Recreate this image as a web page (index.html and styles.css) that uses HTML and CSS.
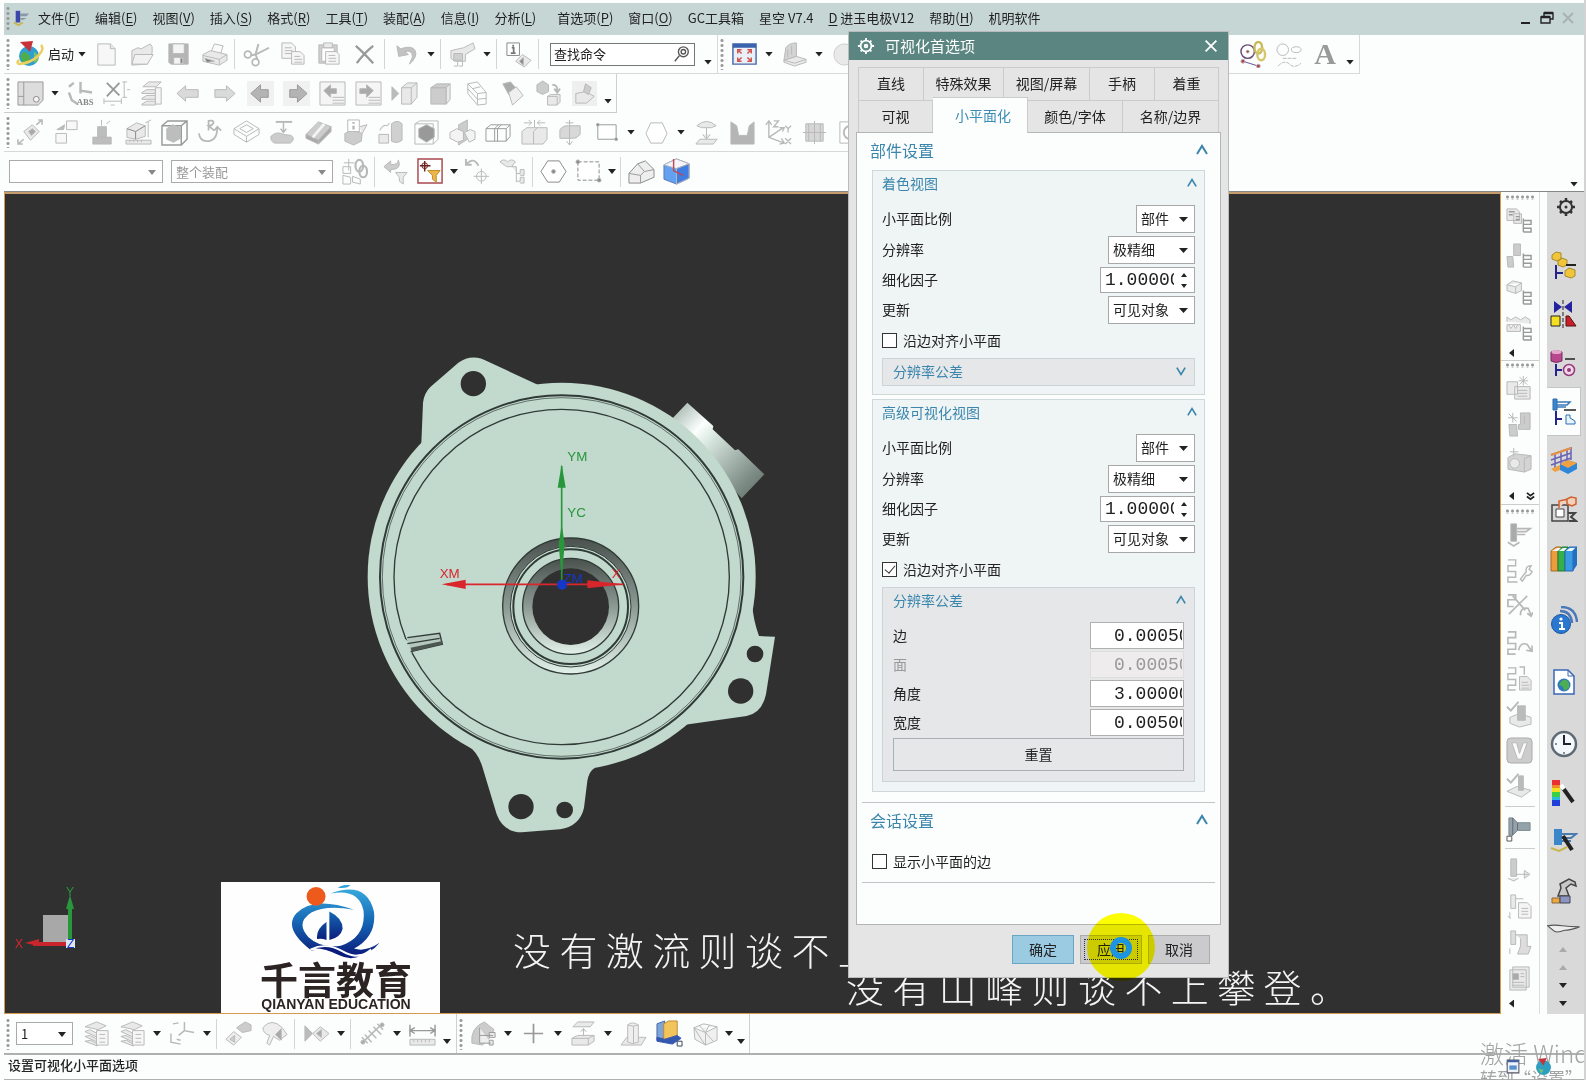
FILE: index.html
```html
<!DOCTYPE html>
<html lang="zh-CN">
<head>
<meta charset="utf-8">
<title>可视化首选项</title>
<link rel="stylesheet" href="styles.css">
</head>
<body>
<div class="app">
  <nav class="menubar">
    <span class="grip"></span>
    <svg class="applogo" viewBox="0 0 20 20"><path d="M3 2h5v13H3z" fill="#3b48a8"/><path d="M8 5h10l-3 3H8zM8 10h7l-3 2H8z" fill="#8a97a8"/><path d="M1 15l5 3 5-3" fill="none" stroke="#c9b64a" stroke-width="2"/></svg>
    <a href="#">文件(<u>F</u>)</a><a href="#">编辑(<u>E</u>)</a><a href="#">视图(<u>V</u>)</a><a href="#">插入(<u>S</u>)</a><a href="#">格式(<u>R</u>)</a><a href="#">工具(<u>T</u>)</a><a href="#">装配(<u>A</u>)</a><a href="#">信息(<u>I</u>)</a><a href="#">分析(<u>L</u>)</a><a href="#" class="apart">首选项(<u>P</u>)</a><a href="#">窗口(<u>O</u>)</a><a href="#">GC工具箱</a><a href="#">星空 V7.4</a><a href="#"><u>D</u> 进玉电极V12</a><a href="#">帮助(<u>H</u>)</a><a href="#">机明软件</a>
    <span class="winctl">
      <button aria-label="最小化"><svg viewBox="0 0 16 16"><path d="M3 13h9" stroke="#222" stroke-width="2"/></svg></button>
      <button aria-label="还原"><svg viewBox="0 0 16 16"><path d="M5 6V3h9v6h-3M2 7h9v6H2z" fill="none" stroke="#222" stroke-width="1.4"/><path d="M5 3h9M2 7h9" stroke="#222" stroke-width="2.6"/></svg></button>
      <button aria-label="关闭"><svg viewBox="0 0 16 16"><path d="M3 3l10 10M13 3L3 13" stroke="#a9b3b3" stroke-width="2"/></svg></button>
    </span>
  </nav>

  <div class="row">
    <div class="bar">
      <span class="grip"></span>
      <button class="start"><svg viewBox="0 0 28 28"><circle cx="13" cy="16" r="10" fill="#2f9fd0"/><path d="M5 14q5-4 8 1t-2 10q-7-3-6-11z" fill="#4fae4a"/><path d="M18 12q5 2 4 9l-4 2z" fill="#7cc06a"/><path d="M25 5q4 4-3 11T3 24q-3-1 0-4" fill="none" stroke="#e9d060" stroke-width="2.500"/><path d="M4 2l13-1-3 11z" fill="#c8333a"/></svg>启动<i class="tri"></i></button>
      <button class="tb" aria-label="新建"><svg viewBox="0 0 28 28"><path d="M5 3h13l5 5v17H5z" fill="#f7f7f7"/><path d="M18 3v5h5"/></svg></button>
      <button class="tb" aria-label="打开"><svg viewBox="0 0 28 28"><path d="M3 10l6-3 4 1 9-5 2 3v6l-5 12-16 1z"/><path d="M6 14h19l-6 10H3z" fill="#f2f2f2"/></svg></button>
      <button class="tb" aria-label="保存"><svg viewBox="0 0 28 28"><path d="M4 3h20v21H6l-2-2z" fill="#b4b4b4"/><path d="M8 3h12v10H8zM9 17h10v7H9z" fill="#f4f4f4"/><path d="M16 18h2v5h-2z" fill="#777"/></svg></button>
      <button class="tb" aria-label="打印"><svg viewBox="0 0 28 28"><path d="M10 12l4-9 9 2-3 9z" fill="#fafafa"/><path d="M2 14l8-4 17 4v6l-8 5-17-4z"/><path d="M2 15l17 4v6M19 19l8-5"/><path d="M4 18l10 3-8 1z" fill="#777"/></svg></button>
      <span class="sep"></span>
      <button class="tb" aria-label="剪切"><svg viewBox="0 0 28 28"><path d="M16 3l-3 11 2 5M27 7l-14 7-6 1" fill="none" stroke-width="2"/><circle cx="5" cy="14" r="3.500" fill="#fff" stroke-width="1.800"/><circle cx="13" cy="22" r="3.500" fill="#fff" stroke-width="1.800"/></svg></button>
      <button class="tb" aria-label="复制"><svg viewBox="0 0 28 28"><path d="M3 2h10l4 4v12H3z" fill="#f5f5f5"/><path d="M6 7h7M6 10h8M6 13h8"/><path d="M13 11h9l4 4v9H13z" fill="#f5f5f5"/><path d="M16 16h6M16 19h8M16 22h8"/></svg></button>
      <button class="tb" aria-label="粘贴"><svg viewBox="0 0 28 28"><path d="M4 4h19v19H4z" fill="#d0d0d0"/><path d="M7 7h13v14H7z" fill="#fff"/><path d="M9 2h9v5H9z"/><path d="M11 11h11l3 3v10H11z" fill="#f7f7f7"/><path d="M14 15h7M14 18h8M14 21h8"/></svg></button>
      <button class="tb" aria-label="删除"><svg viewBox="0 0 28 28"><path d="M5 5q8 7 18 18M23 5Q14 12 6 23" fill="none" stroke="#999" stroke-width="2.400"/></svg></button>
      <span class="sep"></span>
      <button class="tb" aria-label="撤销"><svg viewBox="0 0 28 28"><path d="M4 5l2 11 10-2-4-3q9-2 8 6l-3 7q9-8 6-14T8 8z" fill="#c2c2c2"/></svg></button><i class="tri wide"></i>
      <span class="sep"></span>
      <button class="tb" aria-label="触控"><svg viewBox="0 0 28 28"><path d="M2 10l13-3 10-5 2 6-10 6v7H6l-4-3z"/><path d="M5 13h9v7H5z" fill="#cfcfcf"/><path d="M9 21v5H5M14 21v5h-4" fill="none"/></svg></button><i class="tri wide"></i>
      <span class="sep"></span>
      <button class="tb" aria-label="信息"><svg viewBox="0 0 28 28"><path d="M2 2h13v13H2z" fill="#fff" stroke="#888"/><path d="M8.500 4v2M7 7h2v5M6 12.500h5" stroke="#777" stroke-width="1.800"/><path d="M11 21l7-7 9 6-7 7z"/><path d="M15 21l4-4v8z" fill="#888"/></svg></button>
      <span class="sep"></span>
      <label class="search"><input type="text" value="查找命令" aria-label="查找命令"><svg viewBox="0 0 20 20"><circle cx="11.500" cy="7.500" r="5.500"/><circle cx="11.500" cy="7.500" r="2.500"/><path d="M7 12l-5 6"/></svg></label>
      <i class="tri wide low"></i>
    </div>
    <div class="bar second">
      <span class="grip"></span>
      <button class="tb" aria-label="适合窗口"><svg viewBox="0 0 28 28"><path d="M2 3h24v21H2z" fill="#e9f0f8" stroke="#4a6aa5" stroke-width="1.500"/><path d="M2 3h24v4H2z" fill="#3a62ad" stroke="none"/><path d="M8 10l3 3M20 10l-3 3M8 20l3-3M20 20l-3-3M7 13V9h4M17 9h4v4M7 17v4h4M21 17v4h-4" fill="none" stroke="#d0524a" stroke-width="1.500"/></svg></button><i class="tri wide"></i>
      <button class="tb" aria-label="方位"><svg viewBox="0 0 28 28"><path d="M5 7q3-5 11-5v14L3 20z" fill="#d4d4d4"/><path d="M3 20l13-4 10 3v3l-12 4-11-4z"/><path d="M3 20l11 3 12-4M7 17V9M11 14V5"/></svg></button><i class="tri wide"></i>
      <button class="tb" aria-label="着色"><svg viewBox="0 0 28 28"><circle cx="14" cy="14" r="11" stroke="#ccc"/></svg></button>
    </div>
    <div class="bar third">
      <button class="tb" aria-label="显示曲线"><svg viewBox="0 0 28 28"><circle cx="8" cy="11" r="7" fill="none" stroke="#6b4b78" stroke-width="1.500"/><circle cx="8" cy="11" r="1.500" fill="#b03030"/><ellipse cx="19" cy="7" rx="4" ry="6" fill="none" stroke="#c9b95a" stroke-width="2.500"/><ellipse cx="22" cy="14" rx="4" ry="6" fill="none" stroke="#d6c76a" stroke-width="2.500"/><path d="M3 21l16 5" stroke="#6b4b9a"/><circle cx="3" cy="21" r="2" fill="#b04050"/><circle cx="19" cy="26" r="2" fill="#b04050"/></svg></button>
      <button class="tb" aria-label="曲线"><svg viewBox="0 0 28 28"><circle cx="7" cy="9" r="6" fill="none"/><ellipse cx="21" cy="9" rx="5" ry="3" fill="none"/><path d="M7 18h15M2 26q7-7 12-2t12-1" fill="none" stroke-dasharray="4 1"/></svg></button>
      <button class="tb letter" aria-label="文字">A</button>
      <i class="tri wide low"></i>
    </div>
  </div>

  <div class="row">
    <div class="bar box">
      <span class="grip"></span>
      <button class="tb" aria-label="布局"><svg viewBox="0 0 28 28"><path d="M1 2h26v19l-5 5H1z" fill="#ddd" stroke="#999"/><path d="M7 2v24M1 17h6" stroke="#999"/><circle cx="20" cy="20" r="3" fill="#f5f5f5" stroke="#888"/></svg></button><i class="tri wide"></i>
      <button class="tb" aria-label="绝对坐标"><svg viewBox="0 0 28 28"><path d="M14 2v12M14 11l12 2M2 13l3 8 6 4M2 7l5-4" stroke-width="2.500" fill="none"/><text x="10" y="26" class="abs">ABS</text></svg></button>
      <button class="tb" aria-label="尺寸"><svg viewBox="0 0 28 28"><path d="M4 3l13 13M17 3L4 17" stroke="#999" stroke-width="2"/><path d="M20 2h5M22 2v16M20 18h5M1 22h18M1 19v6M19 19v6M8 26h4M25 10h3"/></svg></button>
      <button class="tb" aria-label="图层"><svg viewBox="0 0 28 28"><path d="M4 7l6-5h13l-5 5zM3 13l5-3h9v4H3zM3 19l5-3h9v4H3zM3 25l5-3h9v4H3z"/><path d="M17 8h6v17h-6z" fill="#f5f5f5"/></svg></button>
      <button class="tb" aria-label="后退"><svg viewBox="0 0 28 28"><path d="M2 14l9-8v4h13v8H11v4z" fill="#dadada"/></svg></button>
      <button class="tb" aria-label="前进"><svg viewBox="0 0 28 28"><path d="M25 14l-9-8v4H4v8h12v4z" fill="#dadada"/></svg></button>
      <button class="tb" aria-label="上一个"><svg viewBox="0 0 28 28"><path d="M0 1h28v26H0z" fill="#f1f1f1" stroke="none"/><path d="M4 14l10-9v5h8v8h-8v5z" fill="#b4b4b4" stroke="#999"/></svg></button>
      <button class="tb" aria-label="下一个"><svg viewBox="0 0 28 28"><path d="M0 1h28v26H0z" fill="#f1f1f1" stroke="none"/><path d="M25 14L15 5v5H7v8h8v5z" fill="#b4b4b4" stroke="#999"/></svg></button>
      <button class="tb" aria-label="上一页"><svg viewBox="0 0 28 28"><path d="M1 2h26v24H1z" fill="#f5f5f5"/><path d="M5 11l7-6v4h6v5h-6v4z" fill="#aaa"/><path d="M14 18h12M14 21h12M14 24h12"/></svg></button>
      <button class="tb" aria-label="下一页"><svg viewBox="0 0 28 28"><path d="M1 2h26v24H1z" fill="#f5f5f5"/><path d="M19 11l-7-6v4H5v5h7v4z" fill="#aaa"/><path d="M14 18h12M14 21h12M14 24h12"/></svg></button>
      <button class="tb" aria-label="镜像"><svg viewBox="0 0 28 28"><path d="M1 7v14l7-7z" fill="#bbb"/><path d="M11 8l6-5h10v15l-6 7H11zM11 8h10v17M21 8l6-5"/></svg></button>
      <button class="tb" aria-label="实体"><svg viewBox="0 0 28 28"><path d="M4 8l6-4h14l-4 4zM4 8h16v17H4z" fill="#ccc"/><path d="M20 8l4-4v16l-4 5z"/></svg></button>
      <button class="tb" aria-label="线框"><svg viewBox="0 0 28 28"><path d="M5 4l10-2 9 11v12l-9 1L5 14zM5 4l10 10 9-1M15 14v12M10 9l8-2M5 9l10 11 9-1" fill="none"/></svg></button>
      <button class="tb" aria-label="光源"><svg viewBox="0 0 28 28"><path d="M4 4l8-2 6 7-8 6z" fill="#aaa"/><path d="M10 13l8-6 7 9-11 10z" fill="#efefef"/></svg></button>
      <button class="tb" aria-label="转换"><svg viewBox="0 0 28 28"><path d="M2 5l6-4 6 4v7l-6 3-6-3z" fill="#ccc"/><path d="M18 5q6 0 5 7M20 9l3 4 3-4" fill="none" stroke-width="2"/><path d="M13 17l3-2h10v8l-3 3H13zM13 17h10v9"/></svg></button>
      <button class="tb" aria-label="渲染"><svg viewBox="0 0 28 28"><path d="M1 1h26v26H1z" fill="#efefef" stroke="none"/><path d="M5 14l10-2 9 5-8 7H5z"/><path d="M15 4l6 4-3 7-5-3z" fill="#ccc"/></svg></button>
      <i class="tri low"></i>
    </div>
  </div>

  <div class="row">
    <div class="bar half">
      <span class="grip"></span>
      <button class="tb" aria-label="移动面"><svg viewBox="0 0 28 28"><path d="M7 13l9-7 7 7-9 9z"/><path d="M12 13l4-3 3 3-4 4z" fill="#aaa"/><path d="M20 6l6-5M22 1h4v5M7 21l-6 5M1 21v5h5" fill="none" stroke-width="1.600"/></svg></button>
      <button class="tb" aria-label="复制面"><svg viewBox="0 0 28 28"><path d="M14 2h11v9H14zM3 15h11v10H3z" fill="#f8f8f8"/><path d="M4 11l8-5-1 5z" fill="#bbb"/></svg></button>
      <button class="tb" aria-label="凸台"><svg viewBox="0 0 28 28"><path d="M9 8h9v11h5v7H4v-7h5z" fill="#bdbdbd"/><path d="M4 19h19M13 1v6M18 5l4-3"/></svg></button>
      <button class="tb" aria-label="块"><svg viewBox="0 0 28 28"><path d="M2 10l10-6 9 3v11l-10 3-9-2z"/><path d="M2 10l9 3 10-6M11 13v8" stroke="#888"/><path d="M1 22h26v4H1z"/><path d="M5 22v2M9 22v2M13 22v2M17 22v2M24 3v16M21 4l6-3"/></svg></button>
      <button class="tb" aria-label="包容体"><svg viewBox="0 0 28 28"><path d="M1 7l6-5h20v19l-6 6H1zM1 7h20v20M21 7l6-5" fill="none" stroke="#999" stroke-width="1.500"/><path d="M6 10l6-4 8 3v11l-7 4-7-3z" fill="#bdbdbd"/></svg></button>
      <button class="tb" aria-label="倒圆"><svg viewBox="0 0 28 28"><path d="M2 15q1 8 8 8 11 0 11-14M18 12l3-4 4 4M12 12V2q6-1 5 2t-5 3l6 5" fill="none" stroke-width="1.800"/></svg></button>
      <button class="tb" aria-label="片体"><svg viewBox="0 0 28 28"><path d="M1 10l13-8 13 8-13 8zM1 16l13 8 13-8M7 10l7-4 7 4-7 4zM1 10v6M27 10v6M14 18v6" fill="none"/></svg></button>
      <button class="tb" aria-label="拔模"><svg viewBox="0 0 28 28"><path d="M7 3h17" stroke-width="2"/><path d="M15 4v9M12 10l3 4 3-4" fill="none" stroke-width="1.500"/><path d="M2 18q6-6 13-2l8 1q5 4-1 8H6q-5-2-4-7z" fill="#ccc"/></svg></button>
      <button class="tb" aria-label="加厚"><svg viewBox="0 0 28 28"><path d="M1 16L14 3l13 5-13 14z" fill="#ccc"/><path d="M1 16v4l13 6v-4zM14 22v4L27 13V8z" fill="#aaa"/><path d="M8 19L20 5" stroke="#f4f4f4" stroke-width="3"/></svg></button>
      <button class="tb" aria-label="对象信息"><svg viewBox="0 0 28 28"><path d="M4 15l9-4 9 4-1 8-8 4-9-4z" fill="#ccc"/><path d="M7 1h12v12H7z" fill="#fff"/><path d="M13 3v2M13 7v4" stroke-width="2.500"/><path d="M19 8l8-2-5 9"/></svg></button>
      <button class="tb" aria-label="替换"><svg viewBox="0 0 28 28"><path d="M15 5q6-5 11 0v17q-5 4-11 1z" fill="#d0d0d0"/><path d="M2 16h10v9H2zM3 12q2-7 8-5l2-3"/></svg></button>
      <button class="tb" aria-label="阴影体"><svg viewBox="0 0 28 28"><path d="M2 5l5-3h19v19l-5 5H2zM2 5h19v21" fill="none"/><path d="M6 10l8-4 8 4v9l-8 5-8-5z" fill="#999"/></svg></button>
      <button class="tb" aria-label="分割"><svg viewBox="0 0 28 28"><path d="M10 6l9-5v20l-9 6z" fill="#ccc"/><path d="M1 14l7-4 7 3v9l-6 2-8-4zM16 14l6-3 5 2v8l-6 3z" fill="#f3f3f3"/></svg></button>
      <button class="tb" aria-label="拼接"><svg viewBox="0 0 28 28"><path d="M1 10l5-4h20v12l-4 5H1zM1 10h21v13M22 10l4-4M10 23V10l4-4M13 23V10l4-4" fill="none" stroke="#999"/></svg></button>
      <button class="tb" aria-label="拉伸"><svg viewBox="0 0 28 28"><path d="M1 13l5-4h21v12l-4 5H1zM13 26V13l4-4"/><path d="M14 1v8M3 4h8M8 1l3 3-3 3M25 4h-8M20 1l-3 3 3 3" fill="none"/></svg></button>
      <button class="tb" aria-label="偏置"><svg viewBox="0 0 28 28"><path d="M3 11q4-5 9-4h12v9q-4 5-9 4H3z" fill="#d8d8d8"/><path d="M13 1v26M9 4h8M10 23l3 4 3-4" fill="none"/></svg></button>
      <button class="tb" aria-label="矩形"><svg viewBox="0 0 28 28"><path d="M5 6h19v15H5z" fill="#fff" stroke="#999"/><circle cx="5" cy="6" r="1.500" fill="#888"/><circle cx="24" cy="21" r="1.500" fill="#888"/></svg></button><i class="tri wide"></i>
      <button class="tb" aria-label="多边形"><svg viewBox="0 0 28 28"><path d="M8 4h12l5 11-5 10H8L3 15z" fill="#fff"/></svg></button><i class="tri wide"></i>
      <button class="tb" aria-label="投影"><svg viewBox="0 0 28 28"><path d="M4 7q10-9 20 0l-5 2H9zM14 9v11M10 16l4 5 4-5M3 26l4-5h18l-4 5z"/></svg></button>
      <button class="tb" aria-label="腔"><svg viewBox="0 0 28 28"><path d="M2 3l6 4 2 10h9l2-10 5-4v23H2z" fill="#b5b5b5"/></svg></button>
      <button class="tb" aria-label="坐标系"><svg viewBox="0 0 28 28"><path d="M4 3v16l16 6M4 19L19 9M1 6l3-4 3 4M15 9h5l-2 4M17 20l3 5-5 1M9 2h5l-5 6h5M21 7l3 3 3-3M24 10v4M21 20l6 6M27 20l-6 6" fill="none" stroke-width="1.400"/></svg></button>
      <button class="tb" aria-label="中心线"><svg viewBox="0 0 28 28"><path d="M5 5h18v18H5z" fill="#d6d6d6"/><path d="M14 2v24M2 14h24M8 5v18M20 5v18" fill="none"/></svg></button>
      <button class="tb" aria-label="孔"><svg viewBox="0 0 28 28"><path d="M3 3h22v22H3z" fill="#fff"/><circle cx="14" cy="14" r="7" fill="none" stroke-width="2"/></svg></button>
    </div>
  </div>

  <div class="row last">
    <div class="combo filter"><select aria-label="类型过滤器"><option></option></select></div>
    <div class="combo scope"><select aria-label="选择范围"><option>整个装配</option></select></div>
    <button class="tb" aria-label="关联"><svg viewBox="0 0 28 28"><path d="M2 9h8v7H2zM2 18l8 2v7H2zM12 19l8 3v5l-8-2zM8 1v12M3 5h11" fill="none"/><ellipse cx="19" cy="8" rx="4" ry="6" fill="none" stroke-width="2.200"/><ellipse cx="23" cy="14" rx="4" ry="6" fill="none" stroke-width="2.200"/></svg></button>
    <span class="sep"></span>
    <button class="tb" aria-label="重置过滤器"><svg viewBox="0 0 28 28"><path d="M2 9l7-6v4q8 0 8-5 4 10-8 10v3z" fill="#ccc"/><path d="M14 15h12l-4 5v7l-4-3v-4z"/></svg></button>
    <button class="tb" aria-label="选择过滤器"><svg viewBox="0 0 28 28"><path d="M1 1h25v25H1z" fill="#fff" stroke="#a8484e" stroke-width="1.500"/><path d="M8 3v11M3 8h11" stroke="#6c2020" stroke-width="1.500"/><circle cx="8" cy="8" r="3" fill="none" stroke="#6c2020"/><path d="M11 13h13l-4 5v7l-4-3v-4z" fill="#ecb64a" stroke="#c08a28"/></svg></button><i class="tri"></i>
    <button class="tb" aria-label="捕捉"><svg viewBox="0 0 28 28"><path d="M2 7q8-9 13 1M2 1v6h6" fill="none" stroke-width="2"/><circle cx="18" cy="19" r="5" fill="none"/><path d="M18 11v16M10 19h16"/></svg></button>
    <button class="tb" aria-label="树"><svg viewBox="0 0 28 28"><path d="M1 4q4-4 8 0 4-4 8 0l-4 5H8zM13 9h5v5M18 12v13M18 16h4v-4h4v6h-4M18 24h4v-4h4v6h-4"/></svg></button>
    <span class="sep"></span>
    <button class="tb" aria-label="点"><svg viewBox="0 0 28 28"><path d="M8 3h12l7 11-7 11H8L1 14z" fill="#fff" stroke="#888"/><circle cx="14" cy="14" r="2" fill="#888"/></svg></button>
    <button class="tb" aria-label="框选"><svg viewBox="0 0 28 28"><path d="M3 4h22v19H3z" fill="#fff" stroke="#888" stroke-dasharray="4 2"/><circle cx="3" cy="4" r="2" fill="#888"/><circle cx="25" cy="23" r="2" fill="#888"/></svg></button><i class="tri"></i>
    <span class="sep"></span>
    <button class="tb" aria-label="房屋"><svg viewBox="0 0 28 28"><path d="M1 16l9-10 8-3 9 9v8l-14 6H1z" fill="#eee" stroke="#888"/><path d="M10 6l7 8-4 4v8M17 14l10-2M1 16l12 2" fill="none" stroke="#999"/></svg></button>
    <button class="tb" aria-label="着色视图"><svg viewBox="0 0 28 28"><path d="M1 7l13-6 13 5v15l-13 6L1 22z" fill="#64a0f0" stroke="#5878b8"/><path d="M1 7l13 4 13-5-13-5z" fill="#f4f4fa"/><path d="M14 11v16l13-6V6z" fill="#3f7de0"/><path d="M11 1v12l10 5" fill="none" stroke="#c04850" stroke-width="1.500"/></svg></button>
    <i class="tri far"></i>
  </div>

  <main class="work">
    <section class="canvas">
      <svg class="model" viewBox="0 0 1320 1530">
        <defs>
          <linearGradient id="cyl" x1="0" y1="0" x2="1" y2="1"><stop offset="0" stop-color="#98aaa2"/><stop offset=".28" stop-color="#fbfffd"/><stop offset=".42" stop-color="#d4e4dc"/><stop offset=".8" stop-color="#7f8f88"/><stop offset="1" stop-color="#5a6661"/></linearGradient>
          <linearGradient id="hub" x1="0" y1="0" x2="0" y2="1"><stop offset="0" stop-color="#4a514e"/><stop offset=".5" stop-color="#8b9993"/><stop offset="1" stop-color="#e2f2ea"/></linearGradient>
        </defs>
        <path d="M965 235l47-50 78 70-2 10 67 63 10-3 78 75-68 72z" fill="url(#cyl)"/>
        <g fill="#c2d9cd">
          <circle cx="635" cy="707" r="582"/>
          <path d="M213 330l6-145q3-28 22-47l84-73q42-30 90-3l145 68 60 100-300 200z"/>
          <path d="M1205 780q5 60 22 105l48 2-27 173q-12 56-58 65l-190 27-100-80z"/>
          <path d="M355 1215q28 18 42 62l43 143q20 54 75 54l115-9q60-10 72-65l10-80q5-30 23-40l-50-80z"/>
        </g>
        <g fill="#303030"><circle cx="370" cy="128" r="38"/><circle cx="1215" cy="939" r="25"/><circle cx="1172" cy="1050" r="38"/><circle cx="513" cy="1397" r="38"/><circle cx="644" cy="1407" r="25"/></g>
        <g fill="none" stroke="#303a36" stroke-width="4"><circle cx="635" cy="708" r="545" stroke-width="6"/><circle cx="635" cy="708" r="538" stroke-width="2"/><circle cx="635" cy="708" r="503"/></g>
        <path d="M160 890l22 45 25-10z" fill="#c2d9cd"/>
        <path d="M172 890l97-13 8 33-95 22M172 908l97-16" fill="#b4c8be" stroke="#303a36" stroke-width="4"/><path d="M182 920l95-20v10l-92 22z" fill="#4c5752"/>
        <circle cx="662" cy="795" r="204" fill="url(#hub)" stroke="#303a36" stroke-width="4"/>
        <circle cx="662" cy="797" r="181" fill="#c2d9cd" stroke="#303a36" stroke-width="3"/><circle cx="662" cy="797" r="172" fill="none" stroke="#303a36" stroke-width="6"/>
        <circle cx="662" cy="796" r="144" fill="url(#hub)" stroke="#303a36" stroke-width="4"/>
        <circle cx="662" cy="797" r="115" fill="#303030"/>
        <g stroke="#28963a" stroke-width="5" fill="#28963a"><path d="M635 375v350"/><path d="M635 370l12 70h-24zM635 550l9 60-9 100-9-100z" stroke="none"/></g>
        <g stroke="#d8262c" stroke-width="5" fill="#d8262c"><path d="M290 730h530"/><path d="M275 730l72-14v28zM822 730l-110-12v24z" stroke="none"/></g>
        <circle cx="636" cy="731" r="15" fill="#1638c8"/>
        <g class="axes"><text x="652" y="360" fill="#28963a">YM</text><text x="652" y="528" fill="#28963a">YC</text><text x="269" y="712" fill="#d8262c">XM</text><text x="785" y="712" fill="#d8262c">X</text><text x="640" y="726" fill="#1638c8">ZM</text></g>
      </svg>
      <svg class="triad" viewBox="0 0 70 70"><path d="M30 30h27v27H30z" fill="#a8a8a8"/><path d="M57 57V18" stroke="#28963a" stroke-width="4"/><path d="M57 10l4 14h-8z" fill="#28963a"/><path d="M57 59H20" stroke="#c8262c" stroke-width="4"/><path d="M12 58l14-4v7z" fill="#c8262c"/><path d="M53 54h9v9h-9z" fill="#dde6f5"/><g class="axes-s"><text x="2" y="63" fill="#d8262c">X</text><text x="53" y="11" fill="#28963a">Y</text><text x="54" y="63" fill="#1638c8">Z</text></g></svg>
      <div class="brand">
        <svg viewBox="0 0 100 78"><defs><linearGradient id="q" x1="0" y1="0" x2="0" y2="1"><stop offset="0" stop-color="#35a8dc"/><stop offset=".5" stop-color="#1565b4"/><stop offset="1" stop-color="#0b1d7c"/></linearGradient></defs><g fill="url(#q)"><path d="M44 9q38-14 46 19 3 26-21 39 12 4 27-6-15 19-41 10-14-5-31-2Q-6 46 8 30q18-19 61-4-30-5-45 3-17 11-3 26 13 12 34 9 27-9 24-37Q74 3 44 9z"/><path d="M52 3q5-4 13-3-2 4-13 3zM43 28q14 7 14 18-2 9-14 12zM40 39v19q-5-2-10-1-1-11 10-18z"/></g><path d="M23 68q17-8 34 2t30-2q-16 16-34 7T23 68z" fill="#0b1d7c" stroke="#fff" stroke-width="2"/><circle cx="29" cy="12" r="10" fill="#ee5a1c"/></svg>
        <strong>千言教育</strong><span>QIANYAN EDUCATION</span>
      </div>
      <p class="caption one">没 有 激 流 则 谈 不 上</p>
      <p class="caption two">没 有 山 峰 则 谈 不 上 攀 登 。</p>
    </section>

    <aside class="tools">
      <span class="hgrip"></span>
      <button class="tb" aria-label="程序树"><svg viewBox="0 0 28 28"><path d="M1 2h10l3 3v9H1zM8 7h8v10H8z"/><path d="M3 5h6M3 8h4M10 10h4M10 13h4M18 12v14M18 14h8v4h-8M18 22h8v4h-8" fill="none" stroke="#999" stroke-width="1.500"/></svg></button>
      <button class="tb" aria-label="刀具树"><svg viewBox="0 0 28 28"><path d="M8 1h7v12H8zM1 14h6l1 11H2z" fill="#ccc"/><path d="M18 11v14M18 13h8v4h-8M18 21h8v4h-8" fill="none" stroke="#999" stroke-width="1.500"/></svg></button>
      <button class="tb" aria-label="几何树"><svg viewBox="0 0 28 28"><path d="M1 6l6-4 9 2v8l-6 3-9-3zM1 6l9 2 6-4M10 8v7"/><path d="M18 12v14M18 14h8v4h-8M18 22h8v4h-8" fill="none" stroke="#999" stroke-width="1.500"/></svg></button>
      <button class="tb" aria-label="方法树"><svg viewBox="0 0 28 28"><path d="M1 7V2l4 3 5-3 5 3 5-3 5 3v4M1 10h14v7H1zM3 10l2 4 3-4 2 4 2-4"/><path d="M18 12v14M18 14h8v4h-8M18 22h8v4h-8" fill="none" stroke="#999" stroke-width="1.500"/></svg></button>
      <span class="more"><i class="left"></i></span>
      <span class="hgrip"></span>
      <button class="tb" aria-label="创建程序"><svg viewBox="0 0 28 28"><path d="M1 7h11v13H1zM9 12h16v13H9z"/><path d="M12 16h10M12 19h10M12 22h10M18 1v10M13 6h10M14 2l8 8M22 2l-8 8"/></svg></button>
      <button class="tb" aria-label="创建刀具"><svg viewBox="0 0 28 28"><path d="M3 14h8l1 12H4zM15 2h10v17H13v-5h2z" fill="#ccc"/><path d="M19 5v8M7 2v10M2 7h10M3 3l8 8"/></svg></button>
      <button class="tb" aria-label="创建几何体"><svg viewBox="0 0 28 28"><path d="M2 11l7-4 17 2v14l-7 3-17-3z" fill="#d4d4d4"/><circle cx="9" cy="17" r="5"/><path d="M8 1v9M4 5h9M19 12v14M19 12l7-3"/></svg></button>
      <span class="more tall"><i class="left"></i><svg viewBox="0 0 10 10"><path d="M1 1l4 3 4-3M1 5l4 3 4-3" fill="none" stroke="#222" stroke-width="2"/></svg></span>
      <span class="hgrip"></span>
      <button class="tb" aria-label="创建工序"><svg viewBox="0 0 28 28"><path d="M5 3h6v18H5z" fill="#aaa"/><path d="M11 8h14l-4 3H11M11 14h9M2 22l6 4 6-4" fill="none" stroke-width="1.800"/></svg></button>
      <button class="tb" aria-label="编辑参数"><svg viewBox="0 0 28 28"><path d="M2 3h8v6H2v6h8v6H2v5h10M15 23l6-8q-1-6 5-6l-2 4 3 2q-2 5-6 4l-4 6z" fill="none" stroke-width="1.500"/></svg></button>
      <button class="tb" aria-label="剪除"><svg viewBox="0 0 28 28"><path d="M2 2h8v5H2v7h6M7 3l13 15M22 3L3 22M15 23q0-9 8-7l3 7M22 21l4 3 2-4" fill="none" stroke-width="1.800"/></svg></button>
      <button class="tb" aria-label="重播"><svg viewBox="0 0 28 28"><path d="M2 3h8v6H2v6h8v6H2v5h8M13 22q2-9 9-6l4 6M21 22l6 1v-6" fill="none" stroke-width="1.700"/></svg></button>
      <button class="tb" aria-label="列表"><svg viewBox="0 0 28 28"><path d="M2 3h8v6H2v6h8v6H2v5h8M14 2h5v8" fill="none" stroke-width="1.500"/><path d="M14 12h8l4 4v10H14z"/><path d="M16 18h7M16 21h8M16 24h8"/></svg></button>
      <button class="tb" aria-label="校验"><svg viewBox="0 0 28 28"><path d="M1 6l4 4 8-9" fill="none" stroke-width="2"/><path d="M4 17l10-4 12 4v7l-12 3-10-4z"/><path d="M12 5h8v15h-8z" fill="#bbb"/></svg></button>
      <button class="tb" aria-label="验证"><svg viewBox="0 0 28 28"><rect x="1" y="1" width="26" height="26" rx="4" fill="#ccc" stroke="#aaa"/><path d="M6 6h5l3 11 4-11h4l-6 17h-4z" fill="#fafafa"/></svg></button>
      <button class="tb" aria-label="过切检查"><svg viewBox="0 0 28 28"><path d="M1 6l4 4 8-9" fill="none" stroke-width="2"/><path d="M1 19l10-5 15 4-10 7z"/><path d="M13 3h5v15h-5z" fill="#bbb"/></svg></button>
      <span class="hsep"></span>
      <button class="tb" aria-label="刀柄"><svg viewBox="0 0 28 28"><path d="M3 3h4l5 5h13v8H12l-5 5H3z" fill="#94a3a9" stroke="#7d8a90"/><path d="M7 3v18M12 8v8" stroke="#667"/><path d="M1 22h5v5H1z" fill="#fff" stroke="#555"/></svg></button>
      <span class="hsep"></span>
      <button class="tb" aria-label="进给"><svg viewBox="0 0 28 28"><path d="M5 2h6v18H5z" fill="#ccc"/><path d="M11 18h12M19 14l6 4-6 4zM2 22l6 3 5-3"/></svg></button>
      <button class="tb" aria-label="后处理"><svg viewBox="0 0 28 28"><path d="M5 2h5v14H5zM10 6h8M4 20v6M2 24l3 3"/><path d="M13 10h9l4 4v12H13z" fill="#f4f4f4"/><path d="M16 16h7M16 19h7M16 22h7"/></svg></button>
      <button class="tb" aria-label="机床"><svg viewBox="0 0 28 28"><path d="M5 2h5v14H5zM10 6h12v12h4l-3 8H12l3-8V10M4 20v6" fill="#ddd"/></svg></button>
      <button class="tb" aria-label="车间文档"><svg viewBox="0 0 28 28"><path d="M7 2h17v21H7zM4 5h17v21H4z"/><path d="M7 9h6v6H7z" fill="#aaa"/><path d="M15 9h4M15 12h4M7 18h12M7 21h12"/></svg></button>
      <span class="more"><i class="left"></i></span>
    </aside>

    <aside class="resource">
      <button class="gear" aria-label="设置"><svg viewBox="0 0 28 28"><circle cx="14" cy="14" r="6" fill="none" stroke="#333" stroke-width="2"/><circle cx="14" cy="14" r="1.500" fill="#333"/><path d="M14 5v3M14 20v3M5 14h3M20 14h3M8 8l2 2M18 18l2 2M20 8l-2 2M10 18l-2 2" stroke="#333" stroke-width="2.500"/></svg></button>
      <button class="first" aria-label="装配导航器"><svg viewBox="0 0 28 28"><path d="M2 4l4-3 5 1v6l-4 2-5-2zM8 10l4-3 5 2v5l-4 2-5-2zM15 20l4-3 6 2v6l-4 2-6-2z" fill="#f0c53a" stroke="#a8892a"/><path d="M6 14v14M6 22h7" stroke="#23238c" stroke-width="2"/><path d="M16 14h10" stroke="#222" stroke-width="2"/></svg></button>
      <button aria-label="约束导航器"><svg viewBox="0 0 28 28"><path d="M4 1l8 6-8 6zM22 1l-8 6 8 6z" fill="#2424a0"/><path d="M13 0v28" stroke="#222" stroke-dasharray="4 2"/><path d="M1 16h9v10H1z" fill="#f4e020" stroke="#222"/><path d="M16 16h3l7 10H16z" fill="#c8202a" stroke="#511"/></svg></button>
      <button aria-label="部件导航器"><svg viewBox="0 0 28 28"><path d="M1 3v9q5 3 11 0V3q-5-3-11 0z" fill="#b8478c" stroke="#7c2c68"/><ellipse cx="6.500" cy="3" rx="5" ry="2" fill="#e4a8cc"/><path d="M6 15v12M6 21h6" stroke="#23238c" stroke-width="2"/><path d="M15 10h10" stroke="#222" stroke-width="1.500"/><circle cx="19" cy="21" r="5.500" fill="#f0d8e8" stroke="#96387c" stroke-width="1.500"/><circle cx="19" cy="21" r="2" fill="#96387c"/></svg></button>
      <button class="on" aria-label="工序导航器"><svg viewBox="0 0 28 28"><path d="M3 1h4v11H3z" fill="#3a86d0" stroke="#2d6aa8"/><path d="M7 4h13l-3 3H7M7 9h9" fill="none" stroke="#3a78b8" stroke-width="1.500"/><path d="M6 13v14M6 21h6" stroke="#23238c" stroke-width="2"/><path d="M14 12h12" stroke="#222" stroke-width="1.500"/><path d="M16 17h4v3l5 3v3h-9z" fill="#e8f4fc" stroke="#2a70b0"/></svg></button>
      <button aria-label="加工特征"><svg viewBox="0 0 28 28"><path d="M1 8l20-7v12M1 13l20-7M1 18l20-7M5 6v15M11 4v14M17 2v12" fill="none" stroke="#6a62b4" stroke-width="1.500"/><path d="M1 8l20-7" stroke="#e89040" stroke-width="2"/><path d="M10 17l8-4 9 3v6l-9 5-8-4z" fill="#2f86d8"/><path d="M10 17l8-4 9 3-9 5zM1 22l9-4v5l-5 2z" fill="#f0a040"/></svg></button>
      <button aria-label="机床导航器"><svg viewBox="0 0 28 28"><path d="M2 9h16v16H2z" fill="#d8d8d8" stroke="#444" stroke-width="1.500"/><path d="M6 13h8v8H6z" fill="#fff" stroke="#444"/><path d="M9 12V5l9-2M17 3l4-2 5 1v6l-4 2-5-2z" fill="#f3d0b8" stroke="#d06030" stroke-width="1.500"/><path d="M18 17h7l-4 4 5 4h-7" fill="none" stroke="#444" stroke-width="2"/></svg></button>
      <button aria-label="重用库"><svg viewBox="0 0 28 28"><path d="M1 6l5-4h5L8 6v20H1z" fill="#ec9c3c" stroke="#a86a20"/><path d="M8 6l4-4h6l-3 4v20H8z" fill="#34b04a" stroke="#207a30"/><path d="M15 6l4-4h8l-4 4v20h-8z" fill="#3a9ae4" stroke="#2868b0"/><path d="M23 6l4-4v18l-4 6z" fill="#2470c0"/><path d="M2 6l5-3h4L8 6zM9 6l4-3h4l-3 3zM16 6l4-3h5l-3 3z" fill="#f2f6f8"/></svg></button>
      <button class="tall push" aria-label="信息"><svg viewBox="0 0 28 28"><circle cx="11" cy="18" r="9.500" fill="#2b78d0" stroke="#1c56a0"/><circle cx="11" cy="13" r="1.600" fill="#fff"/><path d="M9 17h3v6M9 23h6" stroke="#fff" stroke-width="2" fill="none"/><path d="M10 5q11 0 12 12M11 1q15 0 16 15" fill="none" stroke="#4a78b8" stroke-width="2.500"/></svg></button>
      <button class="tall" aria-label="浏览器"><svg viewBox="0 0 28 28"><path d="M4 2h14l6 6v18H4z" fill="#fff" stroke="#3a68b8" stroke-width="1.500"/><path d="M18 2v6h6" fill="none" stroke="#3a68b8"/><circle cx="14" cy="17" r="6.500" fill="#3078c0"/><path d="M9 17q3-6 7-5t3 8l-5 3q0-5-5-6z" fill="#4cae50"/></svg></button>
      <button class="clock" aria-label="历史记录"><svg viewBox="0 0 28 28"><circle cx="14" cy="14" r="12" fill="#f2f8fc" stroke="#606a74" stroke-width="2.500"/><path d="M14 5v9h7" fill="none" stroke="#223" stroke-width="2"/><path d="M14 22v2M5 14h2" stroke="#223"/></svg></button>
      <button aria-label="系统材料"><svg viewBox="0 0 28 28"><path d="M2 1h8v5H2z" fill="#e83030"/><path d="M2 6h8v3H2z" fill="#f08a28"/><path d="M2 9h8v4H2z" fill="#f0e020"/><path d="M2 13h8v5H2z" fill="#38d048"/><path d="M2 18h8v3H2z" fill="#28b8e0"/><path d="M2 21h8v6H2z" fill="#2040d8"/><path d="M13 9l10 14" stroke="#222" stroke-width="4"/><path d="M11 6l3 4" stroke="#fff" stroke-width="4"/></svg></button>
      <button aria-label="加工向导"><svg viewBox="0 0 28 28"><path d="M4 1h8v16H4z" fill="#3a86c8"/><path d="M12 6h14l-5 4h-9M12 13h9" fill="none" stroke="#4a7cb0" stroke-width="2"/><path d="M1 20l8 3 8-4" fill="none" stroke="#c9b64a" stroke-width="2"/><path d="M13 8l9 14" stroke="#222" stroke-width="4"/></svg></button>
      <button aria-label="机器人"><svg viewBox="0 0 28 28"><path d="M8 19l3-8-1-4 9-5 6 3 1 4-5-2-5 4 3 8z" fill="#c8c8c8" stroke="#444" stroke-width="1.500"/><path d="M2 21h8v5H2z" fill="#f0a838" stroke="#864"/><path d="M10 19h10v7H10z" fill="#8c94c0" stroke="#445"/></svg></button>
      <button class="sw" aria-label="曲面"><svg viewBox="0 0 28 14"><path d="M0 5q6-1 13 0t15 1q-8 3-13 3-8 3-10 0z" fill="#eee" stroke="#555"/></svg></button>
      <i class="nav up dim"></i><i class="nav up dim"></i><i class="nav down"></i><i class="nav down"></i>
    </aside>
  </main>

  <div class="row bottom">
    <div class="bar box">
      <span class="grip"></span>
      <div class="combo num"><select aria-label="工作图层"><option>1</option></select></div>
      <button class="tb" aria-label="图层设置"><svg viewBox="0 0 28 28"><path d="M2 7l12-5 10 4-8 4zM2 12l5-2 8 4v4zM2 17l5-1 8 4v3zM2 22l6-1 7 4v2z"/><path d="M14 11h12v15H14z" fill="#f6f6f6"/><path d="M17 15h6M17 19h6M17 23h6"/></svg></button>
      <button class="tb" aria-label="图层视图"><svg viewBox="0 0 28 28"><path d="M2 7l12-5 10 4-8 4zM2 12l5-2 8 4v4zM2 17l5-1 8 4v3zM2 22l6-1 7 4v2z"/><path d="M14 11h12v15H14z" fill="#f6f6f6"/><path d="M17 15h6M17 19h6M17 23h6"/></svg></button><i class="tri wide"></i>
      <button class="tb" aria-label="工作坐标系"><svg viewBox="0 0 28 28"><path d="M16 2v9l10 2M16 11l-6 5M2 14v9l10 2M4 4l6-1M8 20l4 1" fill="none" stroke-width="1.500"/></svg></button><i class="tri wide"></i>
      <span class="sep"></span>
      <button class="tb" aria-label="对象显示"><svg viewBox="0 0 28 28"><path d="M1 20l8-8 8 6-8 8z" fill="#eee"/><path d="M5 20l5-4v7zM12 8l9-6 6 3v6l-9 2z" fill="#ccc"/></svg></button>
      <button class="tb" aria-label="隐藏"><svg viewBox="0 0 28 28"><path d="M2 8q9-11 20 0l5 7-8 6-6-4-4 9-3-2 3-8q-7-2-7-8z" fill="#eee"/><path d="M15 15l6-6v12z" fill="#aaa"/></svg></button>
      <span class="sep"></span>
      <button class="tb" aria-label="显示"><svg viewBox="0 0 28 28"><path d="M2 6l8 8-8 8z" fill="#bbb"/><path d="M10 14l8-7 9 7-9 8z"/><path d="M14 14l5-4v8z" fill="#aaa"/></svg></button><i class="tri wide"></i>
      <span class="sep"></span>
      <button class="tb" aria-label="移动对象"><svg viewBox="0 0 28 28"><path d="M3 24L24 4M6 15l7 8M10 11l8 8M15 7l8 8M19 4l6 6M3 18l6 6" fill="none" stroke-width="1.500"/><circle cx="4" cy="23" r="2" fill="#aaa"/><circle cx="24" cy="5" r="2" fill="#aaa"/></svg></button><i class="tri wide"></i>
      <button class="tb" aria-label="测量"><svg viewBox="0 0 28 28"><path d="M1 5v12M27 5v12M1 11h26M6 8l-5 3 5 3M22 8l5 3-5 3" fill="none" stroke="#999" stroke-width="1.500"/><path d="M1 20h26v6H1z"/><path d="M5 20v3M9 20v3M13 20v3M17 20v3M21 20v3"/></svg></button>
      <i class="tri wide low"></i>
    </div>
    <div class="bar box">
      <span class="grip"></span>
      <button class="tb" aria-label="构造"><svg viewBox="0 0 28 28"><path d="M2 24Q0 8 15 2l10 8-4 8-8 8z" fill="#ccc"/><path d="M10 8v16h12M10 16h14M20 13h6v5h-6zM20 21h4v5h-4z" fill="#eee" stroke="#999"/></svg></button><i class="tri wide"></i>
      <button class="tb" aria-label="点"><svg viewBox="0 0 28 28"><path d="M14 4v20M4 14h20" stroke="#999" stroke-width="1.800"/></svg></button><i class="tri wide"></i>
      <button class="tb" aria-label="拉伸"><svg viewBox="0 0 28 28"><path d="M3 7l5-5h17l-4 5zM14 9v7M11 12l3-3 3 3M2 19l6-3h17v6l-6 4H2zM2 19h17v7M19 19l6-3"/></svg></button><i class="tri wide"></i>
      <button class="tb" aria-label="圆柱"><svg viewBox="0 0 28 28"><path d="M1 26l6-8h20l-5 8z"/><path d="M8 5q5-4 11 0v18q-6 3-11 0z" fill="#eee"/><path d="M8 5q5 3 11 0M14 7v17"/></svg></button>
      <button class="tb" aria-label="装夹"><svg viewBox="0 0 28 28"><path d="M1 4l8-3v17l-8 3z" fill="#7ea4dc" stroke="#4868a0"/><path d="M8 4l5-3h9v16l-5 3H8z" fill="#f3c45c" stroke="#b88a30"/><path d="M1 18l8 2 13-4 4 3-9 6L1 22z" fill="#3458b0" stroke="#3458b0"/><path d="M22 22h5v5h-5z" fill="#fff" stroke="#345"/></svg></button>
      <button class="tb" aria-label="网格"><svg viewBox="0 0 28 28"><path d="M2 8l10-4 14 3v14l-12 5-11-6zM2 8l12 5 12-6M14 13v13M2 8l11 17M14 13l8 9M8 6l6 7 4-8" fill="#f0f0f0"/></svg></button><i class="tri"></i><i class="tri low"></i>
    </div>
  </div>
  <footer class="status">设置可视化小平面选项
    <span class="tray"><svg viewBox="0 0 16 16"><path d="M3 2h11v12H3z" fill="#eef4fa" stroke="#556"/><path d="M3 2h11v2H3z" fill="#4060a0"/><path d="M5 7h7v4H5z" fill="#5a90d0"/></svg><svg viewBox="0 0 16 16"><circle cx="8" cy="9" r="7" fill="#2f9fc0"/><path d="M3 1l8-1-3 7z" fill="#c8333a"/><path d="M3 10l5 1-2 4z" fill="#6fc07a"/></svg></span>
  </footer>
  <div class="watermark"><b>激活 Windows</b><span>转到“设置”以激活</span></div>

  <form class="dialog" role="dialog" aria-label="可视化首选项">
    <header><svg viewBox="0 0 20 20"><circle cx="10" cy="10" r="6"/><circle cx="10" cy="10" r="1.500"/><path d="M10 1v3M10 16v3M1 10h3M16 10h3M4 4l2 2M14 14l2 2M16 4l-2 2M6 14l-2 2"/></svg><h1>可视化首选项</h1><button type="button" aria-label="关闭"><svg viewBox="0 0 20 20"><path d="M4 4l12 12M16 4L4 16"/></svg></button></header>
    <div class="tabs t1"><button type="button">直线</button><button type="button">特殊效果</button><button type="button">视图/屏幕</button><button type="button">手柄</button><button type="button">着重</button></div>
    <div class="tabs t2"><button type="button">可视</button><button type="button" class="active">小平面化</button><button type="button">颜色/字体</button><button type="button">名称/边界</button></div>
    <div class="panel">
      <section>
        <h2>部件设置<svg class="chev" viewBox="0 0 12 12"><path d="M1 10l5-8 5 8"/></svg></h2>
        <div class="group">
          <h3>着色视图<svg class="chev" viewBox="0 0 12 12"><path d="M1 10l5-8 5 8"/></svg></h3>
          <div class="fields">
            <div class="field"><label for="r1">小平面比例</label><span class="dd s"><select id="r1"><option>部件</option></select></span></div>
            <div class="field"><label for="r2">分辨率</label><span class="dd"><select id="r2"><option>极精细</option></select></span></div>
            <div class="field"><label for="r3">细化因子</label><span class="spin"><input id="r3" type="text" value="1.00000"><i></i></span></div>
            <div class="field"><label for="r4">更新</label><span class="dd"><select id="r4"><option>可见对象</option></select></span></div>
          </div>
          <label class="check"><input type="checkbox">沿边对齐小平面</label>
          <div class="sub closed"><h3>分辨率公差<svg class="chev" viewBox="0 0 12 12"><path d="M1 2l5 8 5-8"/></svg></h3></div>
        </div>
        <div class="group">
          <h3>高级可视化视图<svg class="chev" viewBox="0 0 12 12"><path d="M1 10l5-8 5 8"/></svg></h3>
          <div class="fields">
            <div class="field"><label for="v1">小平面比例</label><span class="dd s"><select id="v1"><option>部件</option></select></span></div>
            <div class="field"><label for="v2">分辨率</label><span class="dd"><select id="v2"><option>极精细</option></select></span></div>
            <div class="field"><label for="v3">细化因子</label><span class="spin"><input id="v3" type="text" value="1.00000"><i></i></span></div>
            <div class="field"><label for="v4">更新</label><span class="dd"><select id="v4"><option>可见对象</option></select></span></div>
          </div>
          <label class="check"><input type="checkbox" checked>沿边对齐小平面</label>
          <div class="sub"><h3>分辨率公差<svg class="chev" viewBox="0 0 12 12"><path d="M1 10l5-8 5 8"/></svg></h3>
            <div class="tols">
              <div class="tol"><label for="t1">边</label><input id="t1" type="text" value="0.00050"></div>
              <div class="tol off"><label for="t2">面</label><input id="t2" type="text" value="0.00050" disabled></div>
              <div class="tol"><label for="t3">角度</label><input id="t3" type="text" value="3.00000"></div>
              <div class="tol"><label for="t4">宽度</label><input id="t4" type="text" value="0.00500"></div>
              <button type="button" class="reset">重置</button>
            </div>
          </div>
        </div>
      </section>
      <section class="session">
        <h2>会话设置<svg class="chev" viewBox="0 0 12 12"><path d="M1 10l5-8 5 8"/></svg></h2>
        <label class="check"><input type="checkbox">显示小平面的边</label>
      </section>
    </div>
    <div class="actions"><button type="button" class="ok">确定</button><button type="button" class="apply">应用<span class="halo"></span><span class="ring"></span></button><button type="button">取消</button></div>
  </form>
</div>
</body>
</html>
```

FILE: styles.css
```css
* { box-sizing: border-box; }
body { margin: 0; font: 13px/20px "Noto Sans CJK SC", sans-serif; color: #222; background: #fcfdfd; }
button, select, input { font: inherit; color: inherit; margin: 0; padding: 0; border: 0; background: none; border-radius: 0; }
h1, h2, h3, p { margin: 0; font-weight: 400; }
.app { position: relative; display: flex; flex-direction: column; min-height: 100vh; padding: 3px 0 0 4px; border-right: 2px solid #d4d4d4; overflow: hidden; }

.menubar { display: flex; align-items: center; gap: 15px; height: 32px; padding-bottom: 3px; background: #c5d6d4; }
.menubar a { color: #222; text-decoration: none; white-space: nowrap; }
.menubar u { text-underline-offset: 2px; }
.menubar .grip { height: 24px; }
.menubar .applogo { width: 18px; height: 18px; margin: 0 -8px 0 -14px; }
.menubar .apart { margin-left: 6px; }
.winctl { display: flex; gap: 5px; margin-left: auto; padding-right: 8px; }
.winctl svg { display: block; width: 16px; height: 16px; }
.grip { flex: none; width: 4px; height: 32px; margin: 0 2px; background: radial-gradient(circle, #999 1px, transparent 2px) 0 0 / 4px 5px; }

.row { display: flex; height: 39px; }
.bar { display: flex; align-items: center; border-bottom: 1px solid #d8d8d8; }
.bar.second { flex: 1; border-left: 1px solid #d8d8d8; }
.bar.third { flex: none; border-right: 1px solid #d8d8d8; margin-right: 224px; padding-right: 2px; }
.bar.box { border-right: 1px solid #d0d0d0; padding-right: 2px; border-bottom: 1px solid #ccc; }
.bar.half { flex: none; width: 846px; overflow: hidden; }
.tb { flex: none; width: 36px; height: 36px; display: flex; align-items: center; justify-content: center; }
.tb svg { width: 27px; height: 27px; fill: #e9e9e9; stroke: #b8b8b8; stroke-width: 1; }
.tb.letter { font: bold 30px/36px "Liberation Serif", serif; color: #999; }
.abs { font: bold 9px "Liberation Serif", serif; fill: #888; stroke: none; }
.sep { flex: none; width: 1px; height: 30px; margin: 0 3px 0 2px; background: #d4d4d4; }
.tri { flex: none; width: 8px; height: 5px; margin: 0 2px; background: #222; clip-path: polygon(0 0, 100% 0, 50% 100%); }
.tri.wide { margin: 0 3px; }
.tri.low { margin-top: 16px; }
.tri.far { margin: 25px 6px 0 auto; }
.start { display: flex; align-items: center; width: 76px; white-space: nowrap; }
.start svg { flex: none; width: 28px; height: 28px; margin: 0 4px; }
.start .tri { margin: 0 0 0 4px; }
.search { display: flex; align-items: center; width: 145px; height: 23px; margin-left: 8px; padding: 0 3px; border: 1px solid #777; background: #fff; }
.search input { flex: 1; min-width: 0; }
.search svg { width: 18px; height: 18px; fill: none; stroke: #555; stroke-width: 1.5; }
.search + .tri { margin-left: 9px; margin-right: 5px; }

.row.last { align-items: center; }
.last .tb { width: 35px; }
.combo { position: relative; flex: none; height: 23px; border: 1px solid #aaa; background: #fff; }
.combo select { display: block; width: 100%; height: 100%; padding: 0 4px; appearance: none; opacity: 1; }
.combo::after { content: ""; position: absolute; right: 6px; top: 9px; width: 8px; height: 5px; background: #888; clip-path: polygon(0 0, 100% 0, 50% 100%); pointer-events: none; }
.filter { width: 154px; margin: 0 8px 0 5px; }
.scope { width: 162px; margin-right: 4px; color: #999; }
.num { width: 57px; margin: 0 5px 0 4px; }
.num::after { background: #222; }

.work { flex: 1; display: flex; border-top: 1px solid #888; }
.canvas { position: relative; flex: 1; overflow: hidden; background: #303030; border: 1px solid #d39a50; border-top: 2px solid #c69c6d; }
.model { position: absolute; left: 345px; top: 147px; width: 440px; height: 510px; }
.axes text { font: 40px "Liberation Sans", sans-serif; }
.axes-s text { font: 12px "Liberation Sans", sans-serif; }
.triad { position: absolute; left: 8px; bottom: 58px; width: 70px; height: 70px; overflow: visible; }
.brand { position: absolute; left: 216px; bottom: 0; width: 219px; height: 131px; display: flex; flex-direction: column; align-items: center; background: #fefefe; color: #2c2422; padding: 3px 0 0 11px; }
.brand svg { width: 96px; height: 74px; }
.brand strong { font-size: 38px; line-height: 37px; font-weight: 700; }
.brand span { font: bold 14px/16px "Liberation Sans", sans-serif; white-space: nowrap; }
.caption { position: absolute; color: #f4f4f4; font-size: 38px; line-height: 44px; font-weight: 300; white-space: nowrap; font-family: "KaiTi", "Noto Sans CJK SC", serif; }
.caption.one { left: 508px; bottom: 42px; }
.caption.two { left: 841px; bottom: 5px; }

.tools { flex: none; width: 39px; border-right: 1px solid #ddd; display: flex; flex-direction: column; padding-top: 1px; margin-right: 7px; }
.hgrip { height: 5px; margin: 2px 4px; background: radial-gradient(circle, #999 1px, transparent 2px) 0 0 / 5px 4px; }
.hsep { height: 1px; margin: 2px 4px 3px; background: #ccc; }
.more { display: flex; align-items: center; gap: 12px; height: 15px; padding-left: 8px; border-bottom: 1px solid #ccc; }
.more.tall { height: 27px; padding-top: 10px; margin-bottom: 2px; }
.more svg { width: 9px; height: 9px; }
.tools > .more:last-child { border: 0; }
.left { width: 5px; height: 8px; background: #222; clip-path: polygon(100% 0, 100% 100%, 0 50%); }
.resource { flex: none; width: 37px; background: #d9d9d9; display: flex; flex-direction: column; }
.resource button { flex: none; height: 49px; padding-right: 4px; display: flex; align-items: center; justify-content: center; }
.resource svg { width: 28px; height: 28px; }
.resource .gear { height: 30px; padding: 0; }
.resource .first { margin-top: 18px; }
.resource .tall { height: 62px; }
.resource .push { margin-top: 6px; }
.resource .clock { margin-top: 6px; }
.resource .on { background: #fcfdfd; margin-right: 3px; padding: 0; border: 1px solid #c4c4c4; border-left: 0; }
.resource .sw { height: 26px; }
.resource .sw svg { width: 33px; height: 16px; }
.nav { width: 8px; height: 5px; margin: 6px 0 7px 12px; background: #222; }
.nav.up { clip-path: polygon(50% 0, 100% 100%, 0 100%); }
.nav.down { clip-path: polygon(0 0, 100% 0, 50% 100%); }
.nav.dim { background: #aaa; }

.row.bottom { align-items: stretch; }
.bottom .bar.box { border-bottom: 0; }
.status { position: relative; height: 27px; padding: 0 4px; border-top: 2px solid #b0b0b0; border-bottom: 1px solid #b0b0b0; font-weight: 500; }
.tray { position: absolute; right: 32px; top: 3px; display: flex; gap: 14px; z-index: 2; }
.tray svg { width: 17px; height: 17px; }
.watermark { position: absolute; left: 1480px; bottom: -8px; display: flex; flex-direction: column; color: #a4a4a4; white-space: nowrap; }
.watermark b { font-size: 24px; line-height: 31px; font-weight: 300; }
.watermark span { font-size: 17px; line-height: 20px; }

.dialog { position: absolute; left: 849px; top: 32px; width: 379px; padding: 0 7px 13px; background: #e5e5e5; box-shadow: 0 0 0 1px #bbb; font-size: 14px; }
.dialog header { display: flex; align-items: center; height: 28px; margin: 0 -7px 7px; padding: 0 8px; background: #5a8580; color: #fff; }
.dialog header svg { display: block; width: 18px; height: 18px; fill: none; stroke: #fff; stroke-width: 2; }
.dialog h1 { flex: 1; margin-left: 10px; font-size: 15px; }
.tabs { display: grid; margin: 0 2px; }
.tabs button { padding-bottom: 2px; border: 1px solid #cbcbcb; border-width: 1px 1px 0 0; }
.tabs button:first-child { border-left-width: 1px; }
.t1 { grid-template-columns: 66px 80px 86px 65px 1fr; height: 33px; }
.t2 { grid-template-columns: 75px 95px 95px 1fr; height: 32px; }
.t2 .active { position: relative; z-index: 1; margin: -3px 0 -1px; background: #fcfdfd; color: #3b8db5; padding-left: 6px; }
.panel { height: 793px; border: 1px solid #b4b4b4; background: #fcfdfd; padding: 0 5px; }
.panel section { padding: 0 10px 10px; border-bottom: 1px solid #bfc4c8; }
.panel h2, .panel h3 { display: flex; align-items: center; justify-content: space-between; color: #3b86ad; }
.panel h2 { height: 37px; padding-bottom: 3px; font-size: 16px; margin: 0 -3px 0 -2px; }
.panel h3 { height: 26px; padding-bottom: 2px; font-size: 14px; }
.chev { width: 12px; height: 12px; fill: none; stroke: #3b86ad; stroke-width: 2; }
.panel h3 .chev { width: 10px; height: 10px; margin-right: -2px; }
.group { margin-bottom: 4px; padding: 0 9px 8px; border: 1px solid #cfd8da; background: #eff4f5; }
.group:last-child { margin: 0; padding-bottom: 9px; }
.fields { display: flex; flex-direction: column; gap: 3px; margin-top: 8px; padding-bottom: 3px; }
.field { display: flex; align-items: center; justify-content: space-between; }
.field label, .tol label { padding-bottom: 2px; }
.dd, .spin { position: relative; width: 87px; height: 28px; border: 1px solid #a8a8a8; background: #fff; }
.dd.s { width: 59px; }
.dd select { display: block; width: 100%; height: 100%; padding: 0 0 2px 4px; appearance: none; }
.dd::after { content: ""; position: absolute; right: 6px; top: 11px; width: 9px; height: 5px; background: #222; clip-path: polygon(0 0, 100% 0, 50% 100%); pointer-events: none; }
.spin { width: 95px; height: 26px; }
.spin input { width: 73px; height: 24px; padding-left: 4px; font: 18px/24px "Liberation Mono", monospace; }
.spin i::before, .spin i::after { content: ""; position: absolute; right: 7px; width: 6px; height: 4px; background: #222; }
.spin i::before { top: 5px; clip-path: polygon(50% 0, 100% 100%, 0 100%); }
.spin i::after { bottom: 4px; clip-path: polygon(0 0, 100% 0, 50% 100%); }
.check { display: flex; align-items: center; gap: 6px; height: 26px; }
.check input { appearance: none; position: relative; width: 15px; height: 15px; border: 1px solid #333; background: #fff; }
.check input:checked::after { content: ""; position: absolute; left: 4px; top: 0; width: 5px; height: 9px; border: solid #333; border-width: 0 1px 1px 0; transform: rotate(40deg); }
.sub { margin-top: 5px; padding: 0 10px 10px; border: 1px solid #cdd3d6; background: #e5e7e9; }
.sub.closed { padding-bottom: 0; }
.tols { display: flex; flex-direction: column; gap: 2px; margin-top: 8px; }
.tol { display: flex; align-items: center; justify-content: space-between; }
.tol input { width: 94px; height: 27px; padding: 0 1px 0 23px; border: 1px solid #b0b0b0; background: #fff; font: 18px/24px "Liberation Mono", monospace; }
.tol.off { color: #999; }
.tol.off input { background: #eeecec; border-color: #ddd; }
.reset { height: 33px; padding-bottom: 2px; border: 1px solid #a9b0b4; }
.panel .session { padding: 0 10px 8px; }
.session .check { margin-top: 8px; }
.actions { display: flex; justify-content: flex-end; gap: 6px; padding: 10px 11px 0 0; }
.actions button { width: 62px; height: 29px; padding-bottom: 2px; border: 1px solid #adadad; background: #cbcbcd; }
.actions .ok { background: #9acbe3; border-color: #6aa5c4; }
.actions .apply { position: relative; outline: 1px dotted #333; outline-offset: -5px; }
.halo { position: absolute; left: 6px; top: -23px; width: 68px; height: 68px; border-radius: 50%; background: #ffff00; mix-blend-mode: multiply; z-index: 1; }
.ring { position: absolute; left: 29px; top: 1px; width: 22px; height: 22px; border: 6px solid #1c94e0; border-radius: 50%; z-index: 2; }
```
